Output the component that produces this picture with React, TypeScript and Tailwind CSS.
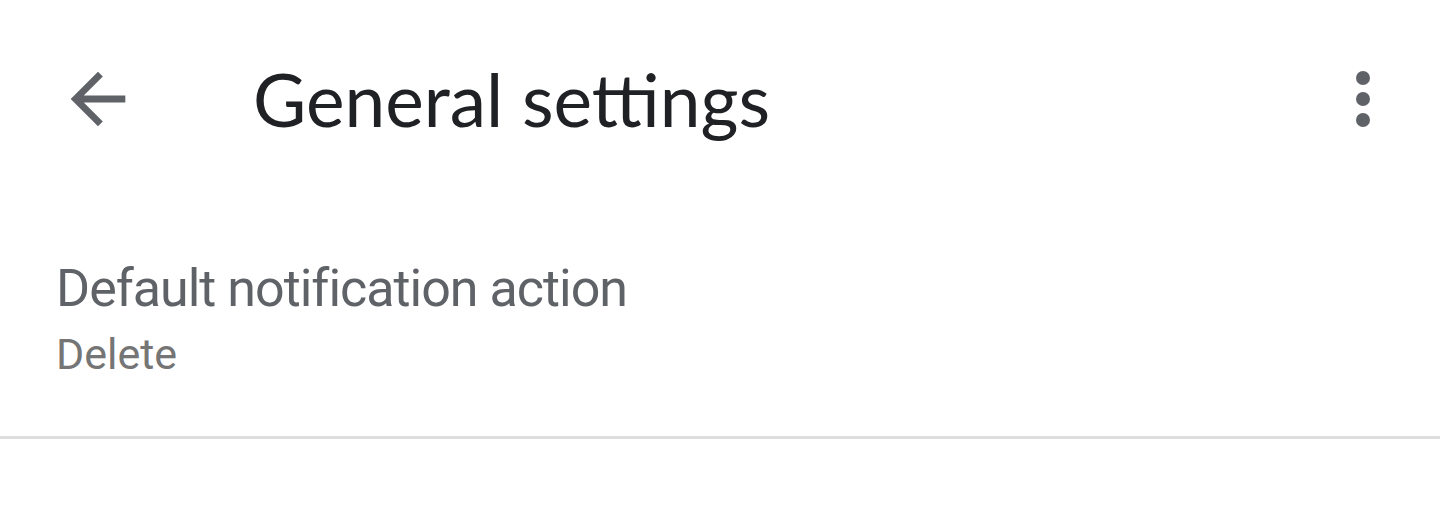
import React from "react";

export default function App() {
  return (
    <div className="w-[1440px] h-[512px] bg-white overflow-hidden">
      <div className="flex items-center h-[82px] mt-[58px] pl-[57px] pr-[35px]">
        <svg width="82" height="82" viewBox="0 0 24 24" className="shrink-0">
          <path fill="#5f6368" d="M20 11H7.83l5.59-5.59L12 4l-8 8 8 8 1.41-1.41L7.83 13H20v-2z" />
        </svg>
        <div
          className="ml-[114px] flex-1 text-[73px] leading-[82px] text-[#202124]"
          style={{ fontFamily: "Lato, 'Open Sans', sans-serif" }}
        >
          General settings
        </div>
        <svg width="84" height="84" viewBox="0 0 24 24" className="shrink-0">
          <g fill="#5f6368">
            <circle cx="12" cy="6" r="2" />
            <circle cx="12" cy="12" r="2" />
            <circle cx="12" cy="18" r="2" />
          </g>
        </svg>
      </div>
      <div className="pl-[56px] pt-[118px] pb-[56px]" style={{ fontFamily: "Roboto, sans-serif" }}>
        <div className="text-[52px] leading-[62px] tracking-[-1px] text-[#5f6368]">Default notification action</div>
        <div className="mt-[8px] text-[43px] leading-[52px] text-[#757575]">Delete</div>
      </div>
      <div className="h-[3px] bg-[#dedede]" />
    </div>
  );
}
